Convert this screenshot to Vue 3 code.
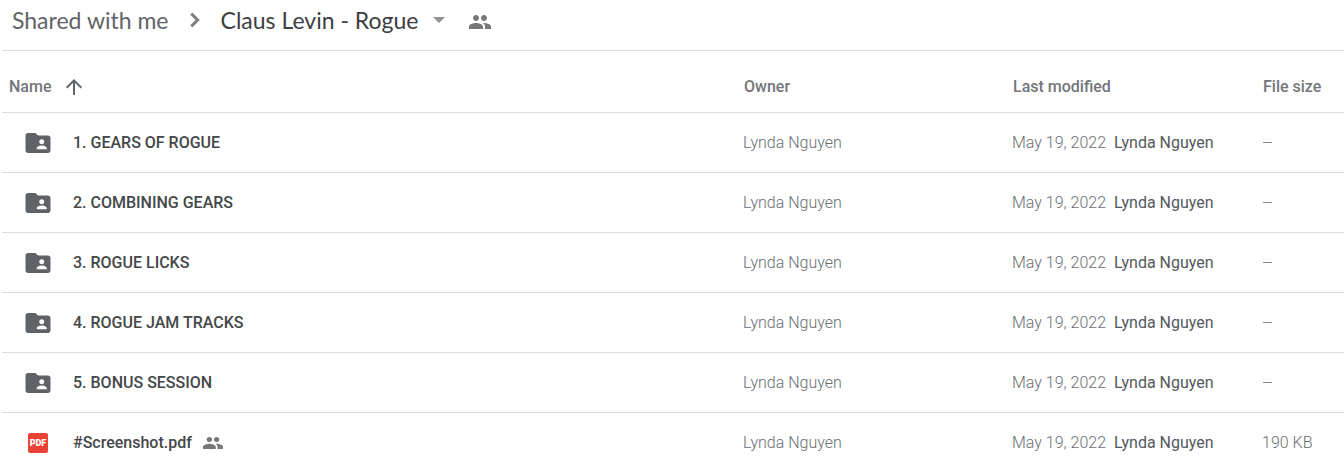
<script setup>
const folders = ['1. GEARS OF ROGUE', '2. COMBINING GEARS', '3. ROGUE LICKS', '4. ROGUE JAM TRACKS', '5. BONUS SESSION']
const files = [
  ...folders.map((name) => ({ name, kind: 'folder', size: '—' })),
  { name: '#Screenshot.pdf', kind: 'pdf', size: '190 KB', shared: true },
]
</script>

<template>
  <main class="drive">
    <nav class="crumbs" aria-label="Breadcrumb">
      <a class="crumb" href="#">Shared with me</a>
      <svg class="chevron" viewBox="0 0 24 24" aria-hidden="true"><path d="M9.700 5.600 7.900 7.400 12.500 12l-4.600 4.600 1.800 1.800L16.100 12z" /></svg>
      <button class="current" type="button">
        Claus Levin - Rogue
        <svg class="caret" viewBox="0 0 12 6" aria-hidden="true"><path d="M0 0h12L6 6z" /></svg>
      </button>
      <button class="share" type="button" aria-label="Manage people">
        <svg class="people" viewBox="1 5 22 14" preserveAspectRatio="none" aria-hidden="true"><path d="M16 11c1.660 0 2.990-1.340 2.990-3S17.660 5 16 5s-3 1.340-3 3 1.340 3 3 3zm-8 0c1.660 0 2.990-1.340 2.990-3S9.660 5 8 5 5 6.340 5 8s1.340 3 3 3zm0 2c-2.330 0-7 1.170-7 3.500V19h14v-2.500c0-2.330-4.670-3.500-7-3.500zm8 0c-.29 0-.62.02-.97.05 1.160.84 1.970 1.970 1.970 3.450V19h6v-2.500c0-2.330-4.670-3.500-7-3.500z" /></svg>
      </button>
    </nav>
    <table class="files">
      <colgroup>
        <col />
        <col class="col-owner" />
        <col class="col-modified" />
        <col class="col-size" />
      </colgroup>
      <thead>
        <tr>
          <th scope="col" aria-sort="ascending">
            <button class="sort" type="button">
              Name
              <svg class="arrow" viewBox="0 0 24 24" aria-hidden="true"><path d="m4 12 1.410 1.410L11 7.830V20h2V7.830l5.580 5.590L20 12l-8-8-8 8z" /></svg>
            </button>
          </th>
          <th scope="col">Owner</th>
          <th scope="col">Last modified</th>
          <th scope="col">File size</th>
        </tr>
      </thead>
      <tbody>
        <tr v-for="file in files" :key="file.name">
          <td>
            <div class="file">
              <span class="icon">
                <svg v-if="file.kind === 'folder'" class="folder" viewBox="0 0 24 24" aria-hidden="true"><path d="M20 6h-8l-2-2H4c-1.100 0-1.990.9-1.990 2L2 18c0 1.100.9 2 2 2h16c1.100 0 2-.9 2-2V8c0-1.100-.9-2-2-2zm-5 3c1.100 0 2 .9 2 2s-.9 2-2 2-2-.9-2-2 .9-2 2-2zm4 8h-8v-1c0-1.330 2.670-2 4-2s4 .67 4 2v1z" /></svg>
                <svg v-else class="pdf" viewBox="0 0 20 20" aria-hidden="true">
                  <rect width="20" height="20" rx="2" />
                  <text x="10" y="13" text-anchor="middle">PDF</text>
                </svg>
              </span>
              <span class="name">{{ file.name }}</span>
              <svg v-if="file.shared" class="people small" viewBox="1 5 22 14" preserveAspectRatio="none" role="img" aria-label="Shared"><path d="M16 11c1.660 0 2.990-1.340 2.990-3S17.660 5 16 5s-3 1.340-3 3 1.340 3 3 3zm-8 0c1.660 0 2.990-1.340 2.990-3S9.660 5 8 5 5 6.340 5 8s1.340 3 3 3zm0 2c-2.330 0-7 1.170-7 3.500V19h14v-2.500c0-2.330-4.670-3.500-7-3.500zm8 0c-.29 0-.62.02-.97.05 1.160.84 1.970 1.970 1.970 3.450V19h6v-2.500c0-2.330-4.670-3.500-7-3.500z" /></svg>
            </div>
          </td>
          <td>Lynda Nguyen</td>
          <td>May 19, 2022 <span class="editor">Lynda Nguyen</span></td>
          <td><span :class="{ none: file.kind === 'folder' }">{{ file.size }}</span></td>
        </tr>
      </tbody>
    </table>
  </main>
</template>

<style>
html {
  overflow: hidden;
}
body {
  background: #fff;
}
</style>

<style scoped>
.drive {
  margin-left: 2px;
  font-family: Roboto, 'Liberation Sans', sans-serif;
  font-size: 16px;
  color: #6b6e72;
}
svg {
  display: block;
  flex: none;
  fill: currentColor;
}
button {
  display: flex;
  align-items: center;
  padding: 0;
  border: 0;
  background: none;
  color: inherit;
  font: inherit;
  cursor: pointer;
}
.crumbs {
  display: flex;
  align-items: center;
  height: 40px;
  padding: 0 10px 10px;
  border-bottom: 1px solid #dadce0;
  font-family: Lato, Roboto, sans-serif;
  font-size: 23px;
  line-height: 30px;
  white-space: nowrap;
}
.crumb {
  color: #5f6368;
  text-decoration: none;
}
.chevron {
  width: 28px;
  height: 28px;
  margin: 0 12px;
  color: #808080;
}
.current {
  gap: 15px;
  color: #3c4043;
}
.caret {
  width: 12px;
  height: 6px;
  color: #8f9194;
}
.share {
  margin: 4px 0 0 24px;
  color: #777;
}
.people {
  width: 22px;
  height: 14px;
}
.people.small {
  width: 20px;
  height: 12px;
  margin-left: 11px;
  color: #777;
}
.files {
  width: 100%;
  table-layout: fixed;
  border-collapse: separate;
  border-spacing: 0;
}
.col-owner {
  width: 269px;
}
.col-modified {
  width: 250px;
}
.col-size {
  width: 82px;
}
th,
td {
  height: 59px;
  padding: 0;
  border-bottom: 1px solid #dadce0;
  line-height: 20px;
  text-align: left;
  white-space: nowrap;
  font-weight: 300;
}
th {
  height: 51px;
  padding: 10px 0 0 1px;
  color: #737679;
  font-weight: 500;
}
tbody tr:last-child td {
  border-bottom: 0;
}
.sort {
  gap: 11px;
  padding-left: 6px;
}
.arrow {
  width: 24px;
  height: 24px;
  color: #5f6368;
}
.file {
  display: flex;
  align-items: center;
  padding-left: 20px;
}
.icon {
  display: flex;
  justify-content: center;
  width: 32px;
  margin-right: 19px;
  color: #5f6368;
}
.folder {
  width: 30px;
  height: 30px;
}
.pdf {
  width: 20px;
  height: 20px;
  color: #ea4335;
}
.pdf text {
  fill: #fff;
  font-size: 9px;
  font-weight: 900;
}
.name {
  color: #444749;
  font-weight: 500;
}
.editor {
  margin-left: 4px;
  color: #55585c;
  font-weight: 400;
}
.none {
  font-size: 14px;
}
</style>
